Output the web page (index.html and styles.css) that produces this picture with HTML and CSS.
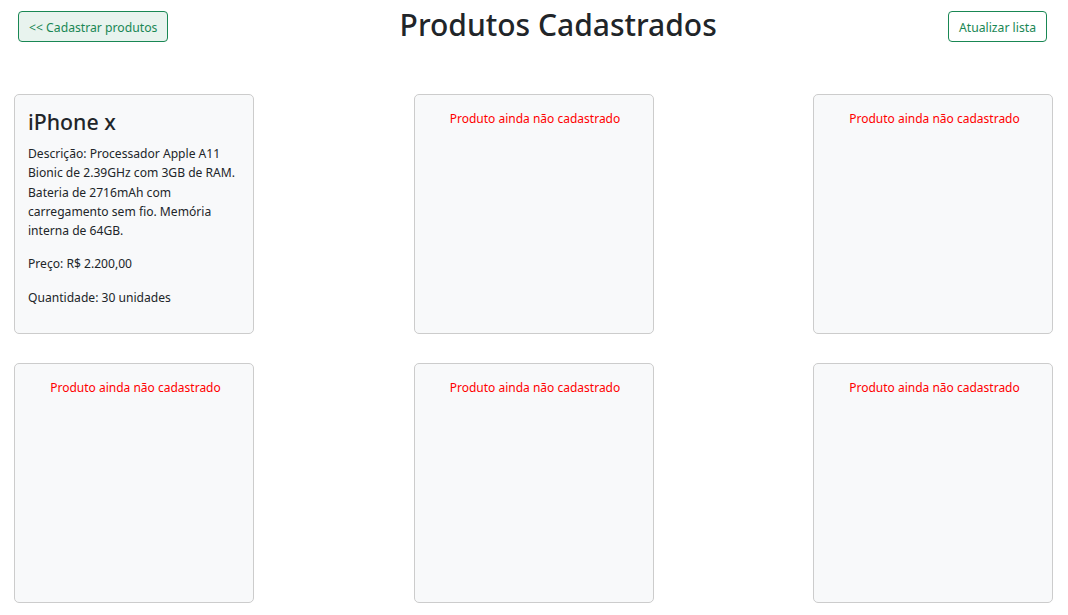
FILE: index.html
```html
<!DOCTYPE html>
<html lang="pt-BR">
<head>
<meta charset="utf-8">
<title>Produtos Cadastrados</title>
<link rel="stylesheet" href="styles.css">
</head>
<body>
<header class="topbar">
  <button class="btn btn-active">&lt;&lt; Cadastrar produtos</button>
  <h1 class="title">Produtos Cadastrados</h1>
  <button class="btn">Atualizar lista</button>
</header>
<main class="grid">
  <div class="card">
    <h2 class="card-title">iPhone x</h2>
    <p class="card-text">Descrição: Processador Apple A11 Bionic de 2.39GHz com 3GB de RAM. Bateria de 2716mAh com carregamento sem fio. Memória interna de 64GB.</p>
    <p class="card-text">Preço: R$ 2.200,00</p>
    <p class="card-text">Quantidade: 30 unidades</p>
  </div>
  <div class="card empty"><p class="missing">Produto ainda não cadastrado</p></div>
  <div class="card empty"><p class="missing">Produto ainda não cadastrado</p></div>
  <div class="card empty"><p class="missing">Produto ainda não cadastrado</p></div>
  <div class="card empty"><p class="missing">Produto ainda não cadastrado</p></div>
  <div class="card empty"><p class="missing">Produto ainda não cadastrado</p></div>
</main>
</body>
</html>
```

FILE: styles.css
```css
* { box-sizing: border-box; }
body {
  margin: 0;
  font-family: "Noto Sans", "Open Sans", sans-serif;
  color: #212529;
  background: #fff;
}
.topbar {
  display: flex;
  justify-content: space-between;
  align-items: flex-start;
  padding: 11px 21px 0 18px;
  height: 94px;
}
.btn {
  font-family: inherit;
  font-size: 12.2px;
  height: 31px;
  padding: 1px 10px 0;
  border: 1px solid #198754;
  border-radius: 4px;
  background: #fff;
  color: #198754;
}
.btn-active { background: #e8f3ee; }
.title {
  margin: 0;
  font-size: 30px;
  font-weight: 500;
  line-height: 28px;
}
.grid {
  display: grid;
  grid-template-columns: repeat(3, 240px);
  justify-content: space-between;
  row-gap: 29px;
  padding: 0 15px 0 14px;
}
.card {
  height: 240px;
  background: #f8f9fa;
  border: 1px solid #ccc;
  border-radius: 5px;
  padding: 13px 10px 13px 13px;
}
.card-title {
  margin: 0 0 9px;
  font-size: 21.3px;
  font-weight: 500;
  line-height: 27px;
}
.card-text {
  margin: 0 0 14px;
  font-size: 12.1px;
  line-height: 19.3px;
}
.missing {
  margin: 1px 0 0;
  text-align: center;
  color: #ff0000;
  font-size: 12px;
  line-height: 20px;
}
```
